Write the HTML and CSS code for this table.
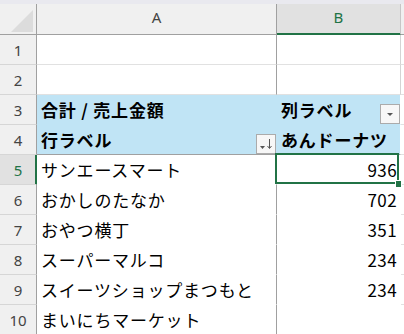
FILE: index.html
```html
<!DOCTYPE html>
<html lang="ja">
<head>
    <meta charset="UTF-8">
    <meta name="viewport" content="width=device-width, initial-scale=1.0">
    <title>ピボットテーブル</title>
    <link rel="stylesheet" href="styles.css">
</head>
<body>

<div class="topbar"></div>

<div class="sheet">
    <!-- column headers -->
    <div class="row head-row">
        <div class="corner"><span class="corner-tri"></span></div>
        <div class="colhead col-a">A</div>
        <div class="colhead col-b active">B</div>
        <div class="colhead edge"></div>
    </div>

    <div class="row plain">
        <div class="rowhead">1</div>
        <div class="cell col-a"></div>
        <div class="cell col-b"></div>
        <div class="edge"></div>
    </div>
    <div class="row plain">
        <div class="rowhead">2</div>
        <div class="cell col-a"></div>
        <div class="cell col-b"></div>
        <div class="edge"></div>
    </div>

    <!-- pivot header -->
    <div class="row pivot-head">
        <div class="rowhead">3</div>
        <div class="cell col-a">合計 / 売上金額</div>
        <div class="cell col-b">列ラベル
            <span class="filter-btn">
                <svg width="18" height="18" viewBox="0 0 18 18"><polygon points="6,8 12,8 9,11" fill="#555"/></svg>
            </span>
        </div>
        <div class="edge"></div>
    </div>
    <div class="row pivot-head last">
        <div class="rowhead">4</div>
        <div class="cell col-a">行ラベル
            <span class="filter-btn">
                <svg width="18" height="18" viewBox="0 0 18 18">
                    <polygon points="3,11 8,11 5.5,14" fill="#555"/>
                    <path d="M12.5 4 V13 M10.5 11 L12.5 13.5 L14.5 11" stroke="#555" stroke-width="1" fill="none"/>
                </svg>
            </span>
        </div>
        <div class="cell col-b">あんドーナツ</div>
        <div class="edge"></div>
    </div>

    <!-- pivot body -->
    <div class="row pivot-body">
        <div class="rowhead active">5</div>
        <div class="cell col-a">サンエースマート</div>
        <div class="cell col-b num selected">936<span class="sel-box"><span class="sel-handle"></span></span></div>
        <div class="edge"></div>
    </div>
    <div class="row pivot-body">
        <div class="rowhead">6</div>
        <div class="cell col-a">おかしのたなか</div>
        <div class="cell col-b num">702</div>
        <div class="edge"></div>
    </div>
    <div class="row pivot-body">
        <div class="rowhead">7</div>
        <div class="cell col-a">おやつ横丁</div>
        <div class="cell col-b num">351</div>
        <div class="edge"></div>
    </div>
    <div class="row pivot-body">
        <div class="rowhead">8</div>
        <div class="cell col-a">スーパーマルコ</div>
        <div class="cell col-b num">234</div>
        <div class="edge"></div>
    </div>
    <div class="row pivot-body">
        <div class="rowhead">9</div>
        <div class="cell col-a">スイーツショップまつもと</div>
        <div class="cell col-b num">234</div>
        <div class="edge"></div>
    </div>
    <div class="row pivot-body">
        <div class="rowhead">10</div>
        <div class="cell col-a">まいにちマーケット</div>
        <div class="cell col-b num"></div>
        <div class="edge"></div>
    </div>
</div>

</body>
</html>
```

FILE: styles.css
```css
body {
    margin: 0;
    background: #fff;
    font-family: "Noto Sans CJK JP", sans-serif;
    overflow: hidden;
}

.topbar {
    height: 4px;
    background: #e9e9ef;
}

.sheet {
    display: grid;
    grid-template-columns: 37px 240px 124px 3px;
    grid-template-rows: 31px repeat(10, 30px);
}

.row {
    display: contents;
}

.row > div {
    box-sizing: border-box;
    border-right: 1px solid #e1e1e1;
    border-bottom: 1px solid #e1e1e1;
}

.row > .edge {
    border-right: none;
}

/* headers */
.corner {
    display: flex;
    justify-content: flex-end;
    align-items: flex-end;
    padding: 0 3px 2px 0;
    background: #f0f0f0;
}

.row > .corner {
    border-right-color: #a0a0a0;
    border-bottom-color: #a0a0a0;
}

.corner-tri {
    width: 22px;
    height: 22px;
    background: #dcdcdc;
    clip-path: polygon(100% 0, 100% 100%, 0 100%);
}

.colhead {
    display: flex;
    justify-content: center;
    align-items: center;
    padding-bottom: 5px;
    background: #f0f0f0;
    font-family: "Noto Sans", sans-serif;
    font-size: 15px;
    color: #444;
}

.row > .colhead {
    border-bottom-color: #a0a0a0;
}

.row > .colhead.col-a {
    border-right-color: #a0a0a0;
}

.row > .colhead.col-b {
    border-right-color: #c6c6c6;
}

.colhead.active {
    background: #e1e1e1;
    color: #217346;
    box-shadow: inset 0 -1px 0 #217346;
}

.row > .colhead.active {
    border-bottom-color: #217346;
}

.rowhead {
    display: flex;
    justify-content: center;
    align-items: center;
    background: #f0f0f0;
    font-family: "Noto Sans", sans-serif;
    font-size: 15px;
    color: #444;
}

.row > .rowhead {
    border-right-color: #a0a0a0;
    border-bottom-color: #d6d6d6;
}

.rowhead.active {
    background: #e1e1e1;
    color: #217346;
    box-shadow: inset -1px 0 0 #217346;
}

.row > .rowhead.active {
    border-right-color: #217346;
}

/* cells */
.cell {
    position: relative;
    display: flex;
    align-items: center;
    padding: 0 4px;
    font-size: 17px;
    letter-spacing: 0.8px;
    color: #000;
    white-space: nowrap;
}

.cell.num {
    justify-content: flex-end;
    padding-right: 3px;
    letter-spacing: 0.4px;
}

.row > .cell.col-a {
    border-right-color: #a0a0a0;
}

.row > .cell.col-b {
    border-right-color: #d4d4d4;
}

/* pivot table */
.pivot-head .cell {
    background: #c0e4f5;
    font-weight: 700;
}

.row.pivot-head > .cell {
    border-bottom-color: #c0e4f5;
    border-right-color: #c0e4f5;
}

.row.pivot-head > .cell.col-b {
    border-right-color: #fff;
}

.row.pivot-head.last > .cell {
    border-bottom-color: #a0a0a0;
}

.row.pivot-body > .cell {
    border-bottom-color: #fff;
}

.row.pivot-body > .cell.col-b {
    border-right-color: #fff;
}

.filter-btn {
    position: absolute;
    right: 0;
    bottom: 0;
    width: 20px;
    height: 20px;
    box-sizing: border-box;
    border: 1px solid #ababab;
    background: #f7f7f7;
}

.filter-btn svg {
    display: block;
}

/* active cell */
.sel-box {
    position: absolute;
    left: -2px;
    top: -2px;
    right: 1px;
    bottom: 0;
    border: 2px solid #217346;
    z-index: 2;
}

.sel-handle {
    position: absolute;
    right: -4px;
    bottom: -5px;
    width: 5px;
    height: 6px;
    background: #217346;
    box-shadow: 0 0 0 1px #fff;
}
```
